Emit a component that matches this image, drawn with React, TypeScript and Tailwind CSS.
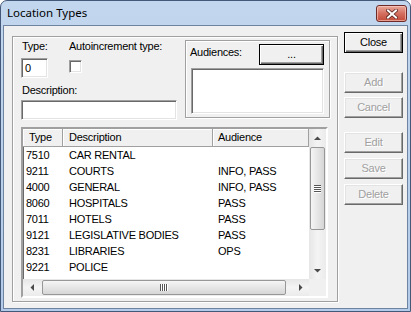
import React from 'react';

const sunken =
  'border border-t-[#a0a0a0] border-l-[#a0a0a0] border-r-white border-b-white shadow-[inset_1px_1px_0_#696969,inset_-1px_-1px_0_#e3e3e3] bg-white';
const raised =
  'border border-t-white border-l-white border-r-[#696969] border-b-[#696969] shadow-[inset_-1px_-1px_0_#a0a0a0,inset_1px_1px_0_#e3e3e3] bg-[#f0f0f0]';
const defaultBtn =
  'border border-black shadow-[inset_1px_1px_0_#fff,inset_-1px_-1px_0_#696969,inset_-2px_-2px_0_#a0a0a0] bg-[#f0f0f0]';
const etched = 'border border-[#a0a0a0] shadow-[inset_1px_1px_0_#fff,1px_1px_0_#fff]';
const disabledText = 'text-[#a0a0a0] [text-shadow:1px_1px_0_#fff]';

const rows = [
  ['7510', 'CAR RENTAL', ''],
  ['9211', 'COURTS', 'INFO, PASS'],
  ['4000', 'GENERAL', 'INFO, PASS'],
  ['8060', 'HOSPITALS', 'PASS'],
  ['7011', 'HOTELS', 'PASS'],
  ['9121', 'LEGISLATIVE BODIES', 'PASS'],
  ['8231', 'LIBRARIES', 'OPS'],
  ['9221', 'POLICE', ''],
  ['7999', 'RECREATION', 'OPS'],
];

function Arrow({ dir }: { dir: 'up' | 'down' | 'left' | 'right' }) {
  const pts = {
    up: '0,4 3.5,0.5 7,4',
    down: '0,0 3.5,3.5 7,0',
    left: '4,0 0.5,3.5 4,7',
    right: '0,0 3.5,3.5 0,7',
  }[dir];
  const vert = dir === 'up' || dir === 'down';
  return (
    <svg width={vert ? 7 : 4} height={vert ? 4 : 7} viewBox={vert ? '0 0 7 4' : '0 0 4 7'}>
      <polygon points={pts} fill="#4a4a4a" />
    </svg>
  );
}

function SideButton({ label, primary, disabled, className = '' }: { label: string; primary?: boolean; disabled?: boolean; className?: string }) {
  return (
    <div
      className={`w-[59px] h-[21px] flex items-center justify-center leading-none ${primary ? defaultBtn : raised} ${
        disabled ? disabledText : 'text-black'
      } ${className}`}
    >
      {label}
    </div>
  );
}

function ListView() {
  return (
    <div className="ml-[8px] mt-[7px] w-[307px] h-[171px] border-2 border-t-[#a0a0a0] border-l-[#a0a0a0] border-r-white border-b-white bg-white">
      <div className="w-full h-full grid grid-cols-[286px_17px] grid-rows-[150px_17px] shadow-[inset_1px_1px_0_#696969]">
        {/* list body */}
        <div className="overflow-hidden">
          <div className="flex h-[18px] bg-[#f0f0f0]">
            <div className="w-[40px] pl-[6px] flex items-center border-r border-b border-r-[#a0a0a0] border-b-[#a0a0a0] shadow-[inset_1px_1px_0_#fff]">Type</div>
            <div className="w-[150px] pl-[6px] flex items-center border-r border-b border-r-[#a0a0a0] border-b-[#a0a0a0] shadow-[inset_1px_1px_0_#fff]">Description</div>
            <div className="w-[96px] pl-[5px] flex items-center border-r border-b border-r-[#a0a0a0] border-b-[#a0a0a0] shadow-[inset_1px_1px_0_#fff]">Audience</div>
          </div>
          {rows.map(([t, d, a]) => (
            <div key={t + d} className="flex h-[16px] items-center">
              <div className="w-[40px] pl-[3px]">{t}</div>
              <div className="w-[150px] pl-[6px]">{d}</div>
              <div className="w-[96px] pl-[5px]">{a}</div>
            </div>
          ))}
        </div>
        {/* vertical scrollbar */}
        <div className="flex flex-col items-center bg-gradient-to-r from-[#e6e6e6] via-[#f4f4f4] to-[#ebebeb]">
          <div className="h-[17px] w-full flex items-center justify-center">
            <Arrow dir="up" />
          </div>
          <div className="mt-[1px] w-[15px] h-[83px] rounded-[2px] border border-[#979797] bg-gradient-to-r from-[#f5f5f5] to-[#d6d6d6] flex items-center justify-center">
            <svg width="7" height="8" viewBox="0 0 7 8">
              <rect x="0" y="0" width="7" height="1" fill="#555" />
              <rect x="0" y="2" width="7" height="1" fill="#555" />
              <rect x="0" y="4" width="7" height="1" fill="#555" />
              <rect x="0" y="6" width="7" height="1" fill="#555" />
              <rect x="0" y="1" width="7" height="1" fill="#fff" />
              <rect x="0" y="3" width="7" height="1" fill="#fff" />
              <rect x="0" y="5" width="7" height="1" fill="#fff" />
              <rect x="0" y="7" width="7" height="1" fill="#fff" />
            </svg>
          </div>
          <div className="flex-1" />
          <div className="h-[17px] w-full flex items-center justify-center">
            <Arrow dir="down" />
          </div>
        </div>
        {/* horizontal scrollbar */}
        <div className="flex items-center bg-gradient-to-b from-[#e6e6e6] via-[#f4f4f4] to-[#ebebeb]">
          <div className="w-[17px] h-full flex items-center justify-center">
            <Arrow dir="left" />
          </div>
          <div className="ml-[2px] h-[15px] w-[244px] rounded-[2px] border border-[#979797] bg-gradient-to-b from-[#f5f5f5] to-[#d6d6d6] flex items-center justify-center">
            <svg width="8" height="7" viewBox="0 0 8 7">
              <rect x="0" y="0" width="1" height="7" fill="#555" />
              <rect x="2" y="0" width="1" height="7" fill="#555" />
              <rect x="4" y="0" width="1" height="7" fill="#555" />
              <rect x="6" y="0" width="1" height="7" fill="#555" />
              <rect x="1" y="0" width="1" height="7" fill="#fff" />
              <rect x="3" y="0" width="1" height="7" fill="#fff" />
              <rect x="5" y="0" width="1" height="7" fill="#fff" />
              <rect x="7" y="0" width="1" height="7" fill="#fff" />
            </svg>
          </div>
          <div className="flex-1" />
          <div className="w-[17px] h-full flex items-center justify-center">
            <Arrow dir="right" />
          </div>
        </div>
        <div className="bg-[#f0f0f0]" />
      </div>
    </div>
  );
}

export default function App() {
  return (
    <div className="w-[411px] h-[312px] bg-white font-['Liberation_Sans',Arial,sans-serif] text-[11px] tracking-[-0.25px] text-black">
      <div className="w-full h-full rounded-t-[7px] border border-[#44597a] bg-gradient-to-b from-[#c2d7ee] to-[#b3cbe8] flex flex-col px-[2px] pb-[2px]">
        {/* Title bar */}
        <div className="h-[24px] flex items-start pl-[4px] pr-[1px]">
          <span className="mt-[5px] font-['Noto_Sans',sans-serif] text-[11.5px] tracking-normal leading-[14px] text-black">Location Types</span>
          <div className="ml-auto mt-[4px] w-[31px] h-[17px] rounded-[3px] border border-[#6e2a26] bg-gradient-to-b from-[#e9a99c] via-[#d46f5f] to-[#c24a3b] shadow-[inset_0_0_0_1px_rgba(255,210,200,0.6)] flex items-center justify-center">
            <svg width="12" height="10" viewBox="0 0 12 10">
              <path d="M2 1.5 L10 8.5 M10 1.5 L2 8.5" stroke="#5a2420" strokeWidth="3.6" strokeLinecap="square" />
              <path d="M2 1.5 L10 8.5 M10 1.5 L2 8.5" stroke="#fff" strokeWidth="2" strokeLinecap="square" />
            </svg>
          </div>
        </div>

        {/* Client area */}
        <div className="flex-1 border border-[#6f84a0] bg-[#f0f0f0] flex items-start pl-[8px] pt-[6px]">
          {/* Group box */}
          <div className={`mt-[4px] w-[326px] h-[266px] ${etched} flex flex-col`}>
            <div className="flex items-start">
              {/* Left fields */}
              <div className="ml-[8px] mt-[3px] w-[156px] flex flex-col">
                <div className="flex">
                  <div className="w-[48px] flex flex-col">
                    <div className="h-[13px] leading-[13px] pl-[1px]">Type:</div>
                    <div className={`mt-[5px] w-[27px] h-[20px] ${sunken} pl-[3px] flex items-center`}>0</div>
                  </div>
                  <div className="flex flex-col">
                    <div className="h-[13px] leading-[13px]">Autoincrement type:</div>
                    <div className={`mt-[7px] w-[13px] h-[13px] ${sunken}`} />
                  </div>
                </div>
                <div className="mt-[6px] h-[13px] leading-[13px] pl-[1px]">Description:</div>
                <div className={`mt-[3px] w-[156px] h-[20px] ${sunken}`} />
              </div>

              {/* Audiences */}
              <div className={`ml-[8px] mt-[3px] w-[145px] h-[78px] ${etched} flex flex-col`}>
                <div className="flex items-start">
                  <div className="w-[73px] pl-[4px] mt-[5px] h-[13px] leading-[13px]">Audiences:</div>
                  <div className={`mt-[3px] w-[65px] h-[21px] ${defaultBtn} flex items-center justify-center leading-none`}>...</div>
                </div>
                <div className={`ml-[5px] mt-[3px] w-[133px] h-[46px] ${sunken}`} />
              </div>
            </div>

            <ListView />
          </div>

          {/* Buttons */}
          <div className="ml-[6px] flex flex-col">
            <SideButton label="Close" primary />
            <SideButton label="Add" disabled className="mt-[19px]" />
            <SideButton label="Cancel" disabled className="mt-[4px]" />
            <SideButton label="Edit" disabled className="mt-[14px]" />
            <SideButton label="Save" disabled className="mt-[5px]" />
            <SideButton label="Delete" disabled className="mt-[5px]" />
          </div>
        </div>
      </div>
    </div>
  );
}
